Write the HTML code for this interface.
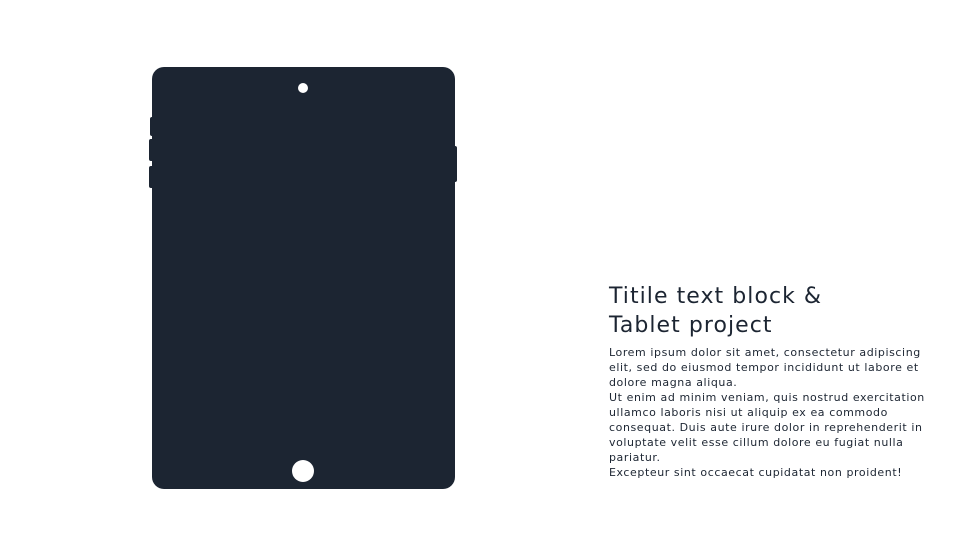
<!DOCTYPE html>
<html><head><style>
body{margin:0;width:960px;height:540px;background:#fff;position:relative;overflow:hidden;font-family:"DejaVu Sans",sans-serif;color:#1c2532}
.b{position:absolute;background:#1c2532}
h1{position:absolute;left:609px;top:282px;margin:0;font-weight:normal;font-size:22px;line-height:29px;letter-spacing:1.05px;color:#1c2532;white-space:nowrap}
p{position:absolute;left:609px;top:345px;margin:0;font-size:11px;line-height:15px;letter-spacing:0.58px;color:#1c2532;white-space:nowrap}
</style></head><body>
<div class="b" style="left:152px;top:67px;width:303px;height:422px;border-radius:12px"></div>
<div class="b" style="left:150px;top:117px;width:4px;height:19px;border-radius:2px"></div>
<div class="b" style="left:149px;top:139px;width:5px;height:22px;border-radius:2px"></div>
<div class="b" style="left:149px;top:166px;width:5px;height:22px;border-radius:2px"></div>
<div class="b" style="left:453px;top:146px;width:4px;height:36px;border-radius:2px"></div>
<div style="position:absolute;left:298px;top:83px;width:10px;height:10px;border-radius:50%;background:#fff"></div>
<div style="position:absolute;left:292px;top:460px;width:22px;height:22px;border-radius:50%;background:#fff"></div>
<h1>Titile text block &amp;<br>Tablet project</h1>
<p>Lorem ipsum dolor sit amet, consectetur adipiscing<br>elit, sed do eiusmod tempor incididunt ut labore et<br>dolore magna aliqua.<br>Ut enim ad minim veniam, quis nostrud exercitation<br>ullamco laboris nisi ut aliquip ex ea commodo<br>consequat. Duis aute irure dolor in reprehenderit in<br>voluptate velit esse cillum dolore eu fugiat nulla<br>pariatur.<br>Excepteur sint occaecat cupidatat non proident!</p>
</body></html>
